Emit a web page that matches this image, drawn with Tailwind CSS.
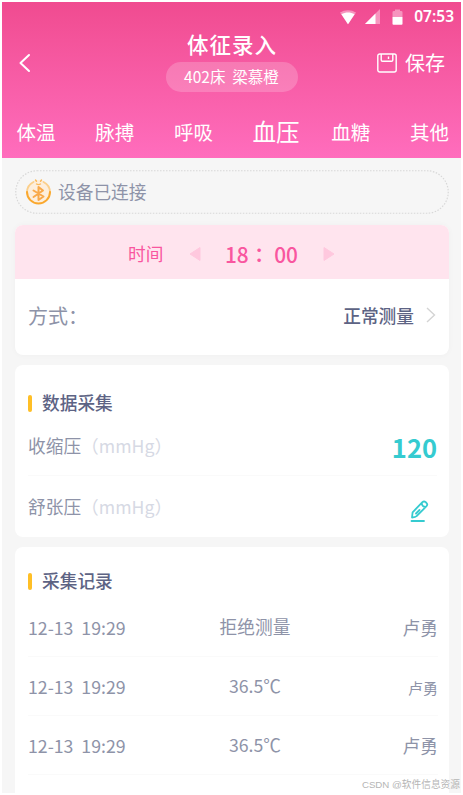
<!DOCTYPE html>
<html lang="zh-CN">
<head>
<meta charset="utf-8">
<meta name="viewport" content="width=device-width, initial-scale=1">
<title>体征录入</title>
<script src="https://cdn.jsdelivr.net/npm/@tailwindcss/browser@4"></script>
</head>
<body class="bg-white font-['Noto_Sans_CJK_SC',sans-serif]">
<div class="relative flex h-[795px] w-[463px] flex-col overflow-hidden border-2 border-white bg-[#f6f6f6] text-[17.7px] text-[#8e93a8]">
  <header class="flex h-[156px] shrink-0 flex-col bg-linear-to-b from-[#f04b90] to-[#ff6dbd] text-white">
    <!-- status bar -->
    <div class="flex h-[29px] items-center justify-end pr-[7px]">
      <svg class="mr-[9px] h-4 w-4" viewBox="0 0 16 16"><path d="M0 3.6C4.5.3 11.500.3 16 3.600L8 15.200Z" fill="#fff" fill-opacity=".4"/><path d="M1.400 5.200C5.500 2.800 10.500 2.800 14.600 5.200L8 15.200Z" fill="#fff"/></svg>
      <svg class="mr-[12px] h-[15px] w-[15px]" viewBox="0 0 15 15"><path d="M0 15L15 0V15Z" fill="#fff" fill-opacity=".4"/><path d="M0 15L10.500 4.500V15Z" fill="#fff"/></svg>
      <svg class="mr-[11px] h-4 w-[11px]" viewBox="0 0 11 16"><path d="M.5 8V3Q.5 2 2 2H3V.5H8V2H9Q10.500 2 10.500 3V8Z" fill="#fff" fill-opacity=".4"/><path d="M.5 8H10.500V15Q10.500 15.700 9.500 15.700H1.500Q.5 15.700.5 15Z" fill="#fff"/></svg>
      <span class="font-['Noto_Sans',sans-serif] text-[15.500px] leading-none font-semibold">07:53</span>
    </div>
    <!-- title bar -->
    <div class="grid h-[66px] grid-cols-[1fr_132px_1fr]">
      <svg class="mt-[22px] ml-[16px] h-[20px] w-[14px]" viewBox="0 0 14 20" fill="none" stroke="#fff" stroke-width="2" stroke-linecap="round" stroke-linejoin="round"><path d="M11 2L2.500 10L11 18"/></svg>
      <div class="flex flex-col items-center">
        <h1 class="h-[31px] pl-[1px] text-[21.500px] leading-[26px] font-medium tracking-[1px]">体征录入</h1>
        <div class="flex h-[30px] w-[132px] items-center justify-center rounded-full bg-white/20 text-[15.500px] leading-none whitespace-pre">402床  梁慕橙</div>
      </div>
      <div class="mt-[22px] flex h-[20px] items-center justify-end pr-[16px]">
        <svg class="mr-[8px] h-[20px] w-[20px]" viewBox="0 0 20 20" fill="none" stroke="#fff" stroke-width="1.400" stroke-linejoin="round"><rect x=".8" y="1" width="18.400" height="18" rx="2"/><path d="M4.200 1V7Q4.200 8.300 5.500 8.300H14.500Q15.800 8.300 15.800 7V1M11.500 3.500V6"/></svg>
        <span class="text-[20px] leading-none">保存</span>
      </div>
    </div>
    <nav class="grid h-[61px] grid-cols-[repeat(6,78.700px)] items-center pt-[8px] pl-[14.500px] text-[19.500px] leading-none">
      <span>体温</span><span>脉搏</span><span>呼吸</span><span class="text-[23.500px]">血压</span><span>血糖</span><span>其他</span>
    </nav>
  </header>

  <main class="flex flex-1 flex-col px-[13px] pt-[12px] pr-[12px]">
    <div class="relative flex h-[44px] shrink-0 items-center pl-[10px]">
      <svg class="absolute inset-0 h-[44px] w-[434px]" viewBox="0 0 434 44" fill="none"><rect x=".75" y=".75" width="432.500" height="42.500" rx="21.250" stroke="#d8d8d8" stroke-width="1.200" stroke-dasharray="1.500 1.500"/></svg>
      <svg class="mr-[6px] h-[28px] w-[27px]" viewBox="0 0 27 28" fill="none" stroke-linecap="round">
        <circle cx="13.500" cy="14" r="12" fill="#fdeedc"/>
        <path d="M8.500 4A11.600 11.600 0 0 0 2 14" stroke="#fbcf8b" stroke-width="1.800"/>
        <path d="M18.500 4A11.600 11.600 0 0 1 25 14" stroke="#fbcf8b" stroke-width="1.800"/>
        <path d="M2 14A11.500 11.500 0 0 0 25 14" stroke="#faa82e" stroke-width="2"/>
        <path d="M10.500 2L11.500 3.300M16.500 2L15.500 3.300M11.500 6Q13.500 7.200 15.500 6" stroke="#fbb95a" stroke-width="1.400"/>
        <path d="M8.500 12.500L18.500 18.500L13.500 22V9L18 12.500L8.500 19" stroke="#f9a94a" stroke-width="2" stroke-linejoin="round"/>
      </svg>
      <span class="leading-none">设备已连接</span>
    </div>

    <section class="mt-[11px] h-[130px] shrink-0 overflow-hidden rounded-[8px] bg-white shadow-[0_0_6px_rgba(0,0,0,0.03)]">
      <div class="flex h-[54px] items-center bg-[#ffe4ee] pt-[4px] pl-[113px] text-[#f9569f]">
        <span class="w-[61px] leading-none">时间</span>
        <svg class="h-[16px] w-[12px]" viewBox="0 0 12 16"><path d="M1 8L11 1.500V14.500Z" fill="#ffc8de" stroke="#ffc8de" stroke-linejoin="round"/></svg>
        <span class="ml-[24px] w-[98px] font-['Noto_Sans_CJK_TC',sans-serif] text-[20.800px] leading-none font-medium whitespace-pre" lang="zh-TW">18： 00</span>
        <svg class="h-[16px] w-[12px]" viewBox="0 0 12 16"><path d="M1 1.500L11 8L1 14.500Z" fill="#ffc8de" stroke="#ffc8de" stroke-linejoin="round"/></svg>
      </div>
      <div class="flex h-[73px] items-center justify-between pr-[13px] pl-[13px]">
        <span class="text-[20px] leading-none">方式：</span>
        <div class="flex items-center gap-[12px] text-[#5d6384]">
          <span class="leading-none font-medium">正常测量</span>
          <svg class="h-[16px] w-[10px]" viewBox="0 0 10 16" fill="none" stroke="#d4d4d4" stroke-width="1.400"><path d="M1 1L8.500 8L1 15"/></svg>
        </div>
      </div>
    </section>

    <section class="mt-[10px] h-[172px] shrink-0 rounded-[8px] bg-white pt-[25px] pr-[12px] pl-[13px]">
      <div class="flex h-[26px] items-center gap-[10px]">
        <i class="h-[17px] w-[4px] rounded-[2px] bg-[#ffbf26]"></i>
        <h2 class="leading-none font-medium text-[#5d6384]">数据采集</h2>
      </div>
      <div class="flex h-[60px] items-center justify-between border-b border-[#fafafa]">
        <span class="leading-none">收缩压<span class="text-[#d6d9e4]">（mmHg）</span></span>
        <span class="pt-[2px] text-[25.500px] leading-none font-bold text-[#35cbd0]">120</span>
      </div>
      <div class="flex h-[60px] items-center justify-between">
        <span class="pt-[1px] leading-none">舒张压<span class="text-[#d6d9e4]">（mmHg）</span></span>
        <svg class="mt-[10px] mr-[8px] h-[22px] w-[19px]" viewBox="0 0 19 22" fill="none" stroke="#35cbd0" stroke-width="1.800" stroke-linecap="round" stroke-linejoin="round"><path d="M2 17.500L2.600 12.300L12.400 2.200Q14 .7 15.700 2.200L16.500 3Q18 4.600 16.500 6.200L6.600 16.200Q5.500 17.200 2 17.500ZM11.800 3Q11.800 6.800 15.700 6.800M6 13.500L9.500 10M1.500 21H14"/></svg>
      </div>
    </section>

    <section class="mt-[10px] h-[260px] shrink-0 rounded-[8px] bg-white pt-[21px] pr-[11px] pl-[13px]">
      <div class="flex h-[26px] items-center gap-[10px]">
        <i class="h-[17px] w-[4px] rounded-[2px] bg-[#ffbf26]"></i>
        <h2 class="leading-none font-medium text-[#5d6384]">采集记录</h2>
      </div>
      <div class="grid h-[63px] grid-cols-[127px_200px_1fr] items-center border-b border-[#fafafa] leading-none">
        <span class="mt-[5px] whitespace-pre">12-13  19:29</span><span class="mt-[3px] text-center">拒绝测量</span><span class="mt-[5px] text-right">卢勇</span>
      </div>
      <div class="grid h-[59px] grid-cols-[127px_200px_1fr] items-center border-b border-[#fafafa] leading-none">
        <span class="pt-[2px] whitespace-pre">12-13  19:29</span><span class="text-center">36.5℃</span><span class="mt-[2px] text-right text-[15px]">卢勇</span>
      </div>
      <div class="grid h-[59px] grid-cols-[127px_200px_1fr] items-center border-b border-[#fafafa] leading-none">
        <span class="pt-[2px] whitespace-pre">12-13  19:29</span><span class="text-center">36.5℃</span><span class="pt-[2px] text-right">卢勇</span>
      </div>
    </section>
  </main>
  <div class="absolute right-[1px] bottom-0 font-['Liberation_Sans','Noto_Sans_CJK_SC',sans-serif] text-[9.700px] leading-[16px] whitespace-nowrap text-[#b5b5b5]">CSDN @软件信息资源</div>
</div>
</body>
</html>
